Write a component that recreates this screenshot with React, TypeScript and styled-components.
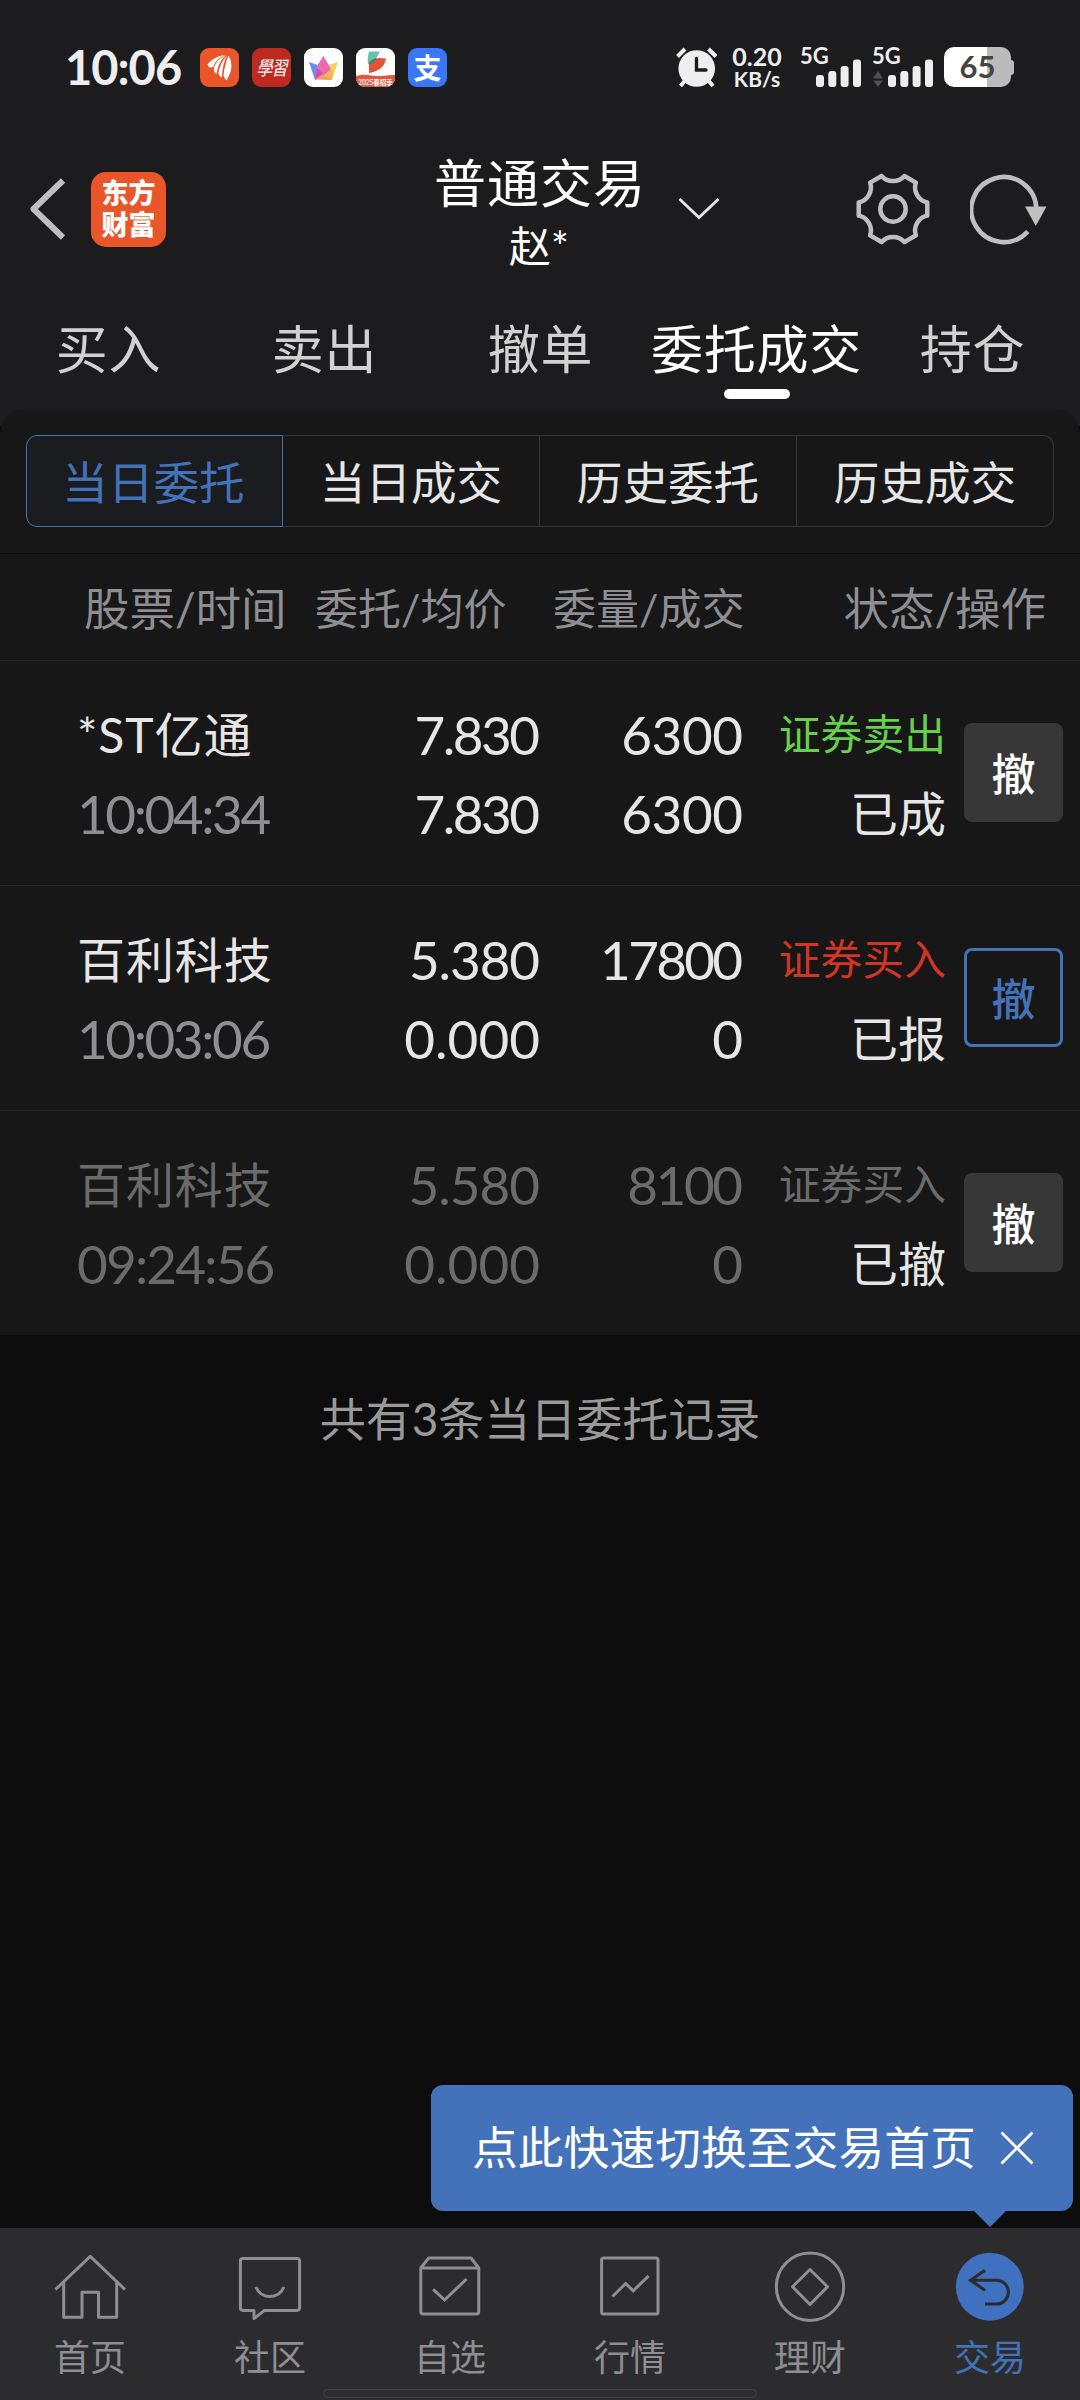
import React from "react";
import styled, { createGlobalStyle } from "styled-components";

const GlobalStyle = createGlobalStyle`
  * { box-sizing: border-box; }
  body { margin: 0; background: #0d0d0d; }
`;

const Page = styled.div`
  position: relative;
  width: 1080px;
  height: 2400px;
  display: flex;
  flex-direction: column;
  overflow: hidden;
  background: #0d0d0d;
  color: #e6e6e6;
  font-family: Lato, "Noto Sans CJK SC", sans-serif;
  white-space: nowrap;
`;

const Top = styled.header`
  flex: none;
  height: 426px;
  background: #1c1c1e;
`;

/* ---------- status bar ---------- */

const StatusBar = styled.div`
  height: 134px;
  padding: 0 67px 0 65px;
  display: flex;
  align-items: center;
  justify-content: space-between;
  color: #eeeeee;
`;

const StatusSide = styled.div`
  display: flex;
  align-items: center;
`;

const Clock = styled.span`
  width: 135px;
  font-size: 47px;
  font-weight: 700;
  line-height: 60px;
  letter-spacing: -1px;
`;

const AppIcons = styled.div`
  display: flex;
  gap: 13px;
`;

const AppIcon = styled.div<{ $bg: string }>`
  position: relative;
  width: 39px;
  height: 39px;
  border-radius: 9px;
  overflow: hidden;
  background: ${(p) => p.$bg};
  color: #fff;
  display: flex;
  align-items: center;
  justify-content: center;
`;

const Calligraphy = styled.span`
  font: italic 400 16px/20px "Noto Sans CJK TC", sans-serif;
  letter-spacing: -1px;
  transform: scaleY(1.2);
`;

const Ribbon = styled.span`
  position: absolute;
  left: 0;
  right: 0;
  bottom: 0;
  height: 11px;
  background: #df5641;
  font: 700 6.5px/14px Lato, "Noto Sans CJK SC", sans-serif;
  text-align: center;
`;

const Pay = styled.span`
  font: 700 28px/36px "Noto Sans CJK SC", sans-serif;
`;

const Speed = styled.div`
  width: 58px;
  margin-left: 10px;
  display: flex;
  flex-direction: column;
  align-items: center;
  font-weight: 700;
`;

const SpeedValue = styled.span`
  font-size: 25px;
  line-height: 23px;
`;

const SpeedUnit = styled.span`
  font-size: 21px;
  line-height: 22px;
`;

const Signal = styled.div<{ $gap: number }>`
  position: relative;
  width: 60px;
  height: 40px;
  margin-left: ${(p) => p.$gap}px;
`;

const Network = styled.span`
  position: absolute;
  left: -1px;
  top: -3px;
  font-size: 22px;
  line-height: 24px;
  font-weight: 700;
`;

const Battery = styled.div`
  width: 67px;
  height: 40px;
  margin-left: 11px;
  border-radius: 10px;
  background: linear-gradient(90deg, #fff 63.5%, #bbb 63.5%);
  color: #444;
  font-size: 31px;
  font-weight: 700;
  line-height: 39px;
  text-align: center;
`;

const BatteryTip = styled.div`
  width: 3px;
  height: 15px;
  border-radius: 0 3px 3px 0;
  background: #bbb;
  margin-right: -1px;
`;

/* ---------- title bar ---------- */

const TitleBar = styled.div`
  height: 150px;
  padding: 0 30px 0 28px;
  display: grid;
  grid-template-columns: 400px 1fr 400px;
  align-items: center;
`;

const BackArea = styled.div`
  display: flex;
  align-items: center;
  gap: 25px;
`;

const Brand = styled.div`
  width: 75px;
  height: 75px;
  border-radius: 15px;
  background: #ea5529;
  color: #fff;
  font: 900 27px/32px "Noto Sans CJK SC", sans-serif;
  text-align: center;
  padding-top: 4px;
`;

const TitleArea = styled.div`
  display: flex;
  flex-direction: column;
  align-items: center;
  padding-top: 11px;
  color: #fff;
`;

const TitleLine = styled.div`
  position: relative;
  left: 1px;
`;

const Title = styled.h1`
  margin: 3px 0 0;
  font-size: 52px;
  letter-spacing: 1px;
  font-weight: 400;
  line-height: 60px;
`;

const ChevronSlot = styled.span`
  position: absolute;
  left: 244px;
  top: 47px;
  line-height: 0;
`;

const Owner = styled.span`
  font-size: 42px;
  line-height: 66px;
`;

const Actions = styled.div`
  display: flex;
  align-items: center;
  justify-content: flex-end;
  gap: 39px;
`;

/* ---------- tabs ---------- */

const Tabs = styled.nav`
  display: grid;
  grid-template-columns: repeat(5, 1fr);
  height: 125px;
`;

const Tab = styled.div<{ $active?: boolean }>`
  display: flex;
  flex-direction: column;
  align-items: center;
  padding: 30px 0 0 1px;
  font-size: 52px;
  letter-spacing: 0.8px;
  line-height: 70px;
  color: ${(p) => (p.$active ? "#ffffff" : "#d1d1d1")};

  &::after {
    content: "";
    width: 66px;
    height: 10px;
    margin-top: 5px;
    border-radius: 5px;
    background: ${(p) => (p.$active ? "#ffffff" : "transparent")};
  }
`;

/* ---------- order panel ---------- */

const Panel = styled.main`
  flex: none;
  margin-top: -17px;
  border-radius: 25px 25px 0 0;
  background: #171717;
`;

const SegmentWrap = styled.div`
  height: 145px;
  padding: 26px 26px 0;
  border-bottom: 1px solid #0b0b0b;
`;

const Segments = styled.div`
  display: flex;
  height: 92px;
  font-size: 45.6px;
`;

const Segment = styled.div<{ $active?: boolean }>`
  width: 257px;
  display: flex;
  align-items: center;
  justify-content: center;
  line-height: 86px;
  padding-top: 4px;
  border: 1px solid ${(p) => (p.$active ? "#4472b4" : "#363636")};
  border-left-width: ${(p) => (p.$active ? 1 : 0)}px;
  color: ${(p) => (p.$active ? "#4472b8" : "#e6e6e6")};
  background: ${(p) => (p.$active ? "#1a1c20" : "transparent")};

  &:first-child { border-radius: 11px 0 0 11px; padding-right: 2px; }
  &:last-child { border-radius: 0 11px 11px 0; }
`;

const ColumnHeads = styled.div`
  display: grid;
  grid-template-columns: 231px 238px 1fr auto;
  height: 107px;
  padding: 0 34px 0 84px;
  border-bottom: 1px solid #272727;
  line-height: 110px;
  color: #8e8e93;
`;

const Head = styled.span<{ $size: number }>`
  font-size: ${(p) => p.$size}px;
`;

const OrderRow = styled.section`
  display: grid;
  grid-template-columns: 201px 262px 203px 203px 99px;
  align-items: center;
  height: 225px;
  padding: 0 0 0 77px;
  border-bottom: 1px solid #242424;

  &:last-child {
    height: 224px;
    border-bottom: 0;
  }
`;

const Cell = styled.div<{ $align?: string }>`
  display: flex;
  flex-direction: column;
  align-items: ${(p) => p.$align ?? "flex-end"};
  padding-top: 2px;
  line-height: 79px;
`;

const Name = styled.span<{ $color: string }>`
  font-size: 48px;
  letter-spacing: 0.9px;
  color: ${(p) => p.$color};
`;

const Time = styled.span<{ $color: string; $tracking: number }>`
  font-size: 53px;
  letter-spacing: ${(p) => p.$tracking}px;
  color: ${(p) => p.$color};
`;

/* The trailing tracking is given back as a margin so the column edge stays straight. */
const Figure = styled.span<{ $color: string; $tracking: number }>`
  font-size: 53px;
  letter-spacing: ${(p) => p.$tracking}px;
  margin-right: ${(p) => -p.$tracking}px;
  color: ${(p) => p.$color};
`;

const Side = styled.span<{ $color: string }>`
  font-size: 41.8px;
  color: ${(p) => p.$color};
`;

const State = styled.span`
  font-size: 48px;
  color: #e6e6e6;
`;

const CancelButton = styled.button<{ $outlined?: boolean }>`
  width: 99px;
  height: 99px;
  margin: 0 0 1px 18px;
  padding: 2px 0 0;
  border: ${(p) => (p.$outlined ? "3px solid #4472b8" : "0")};
  border-radius: 8px;
  background: ${(p) => (p.$outlined ? "transparent" : "#373737")};
  color: ${(p) => (p.$outlined ? "#4472b8" : "#ffffff")};
  font: 500 44px/90px Lato, "Noto Sans CJK SC", sans-serif;
`;

const Summary = styled.p`
  margin: 0;
  text-align: center;
  font-size: 46px;
  line-height: 168px;
  color: #999;
`;

/* ---------- tooltip ---------- */

const Hint = styled.div`
  position: absolute;
  left: 431px;
  top: 2085px;
  width: 642px;
  height: 126px;
  padding: 0 39px 0 41px;
  border-radius: 12px;
  background: #4472ba;
  color: #fff;
  font-size: 45.8px;
  line-height: 124px;
  display: flex;
  align-items: center;
  justify-content: space-between;

  &::after {
    content: "";
    position: absolute;
    left: 542px;
    top: 125px;
    border: 17px solid transparent;
    border-top-color: #4472ba;
    border-bottom: 0;
  }
`;

/* ---------- bottom navigation ---------- */

const BottomNav = styled.nav`
  position: relative;
  flex: none;
  margin-top: auto;
  height: 172px;
  display: grid;
  grid-template-columns: repeat(6, 1fr);
  background: #2c2c2e;
`;

const NavItem = styled.div<{ $active?: boolean }>`
  display: flex;
  flex-direction: column;
  align-items: center;
  padding-top: 18px;
  color: ${(p) => (p.$active ? "#4472b8" : "#8e8e93")};
  font-size: 36px;
  line-height: 62px;
`;

const HomeHandle = styled.div`
  position: absolute;
  left: 323px;
  top: 161px;
  width: 434px;
  height: 9px;
  border-radius: 5px;
  border: 1px solid #404042;
  background: #2e2e2f;
`;

/* ---------- drawings ---------- */

const AlarmIcon = () => (
  <svg width="42" height="42" viewBox="0 0 42 42">
    <g stroke="#eee" strokeWidth="4" fill="none">
      <path d="M1.500 10.500 9 3M40 10.500 32.500 3" />
      <path d="M4.500 40l5-6M37 40l-5-6" />
    </g>
    <circle cx="20.700" cy="22.500" r="18.300" fill="#eee" />
    <path d="M20.500 12.500v11.500h9.500" stroke="#1c1c1e" strokeWidth="3.300" fill="none" strokeLinecap="round" />
  </svg>
);

const SignalBars = ({ arrows }: { arrows?: boolean }) => (
  <svg width="60" height="40" viewBox="0 0 60 40">
    <g fill="#eee">
      <rect x="15" y="28" width="8" height="12" rx="3" />
      <rect x="27.300" y="24" width="8" height="16" rx="3" />
      <rect x="39.600" y="19" width="8" height="21" rx="3" />
      <rect x="52" y="12.500" width="8" height="27.500" rx="3" />
    </g>
    {arrows && <path d="M0 31.500l5-7.500 5 7.500zM0 33.500l5 6.500 5-6.500z" fill="#505052" />}
  </svg>
);

const FlameLogo = () => (
  <svg width="39" height="39" viewBox="0 0 39 39" fill="#fff">
    <path d="M25 7C17 8 11 12 7.500 16.500c1 3.200 3.500 3.800 6 2C15 13.500 19 9.500 25 7z" />
    <path d="M26 7.300C20 9.500 16 14 14 19.500c-.500 3 .200 5 2.500 6.500C18 18.500 20 12.500 26 7.300z" />
    <path d="M27 7.500C22.500 12 19.500 18 18.500 25c.300 2.300 1.500 3.600 3.500 4.300C22 22 23.500 14.500 27 7.500z" />
    <path d="M28.300 7.800c-2 6-4 12-4.800 19.200.500 2.500 1.500 4.200 3 5.300 3-5 5.500-10 4.800-16.300-.300-3.300-1.300-6-3-8.200z" />
  </svg>
);

const CrownLogo = () => (
  <svg width="39" height="39" viewBox="0 0 39 39">
    <path d="M5 14l7.500 2.500L20 27l-9 5z" fill="#6a8ff0" />
    <path d="M34 14l-8 2.500L18 27l10 5z" fill="#f6cf63" />
    <path d="M19.500 8l7.500 13-8 9-8 1 2.500-14z" fill="#ea6bb0" />
    <path d="M27 21l-8 7 9 4 1-8z" fill="#f5b84d" />
    <path d="M10 31.500l9-4.500 9.500 5z" fill="#e9a25c" />
    <path d="M13 20l-2 11.500 8-6z" fill="#d94ab0" />
  </svg>
);

const LeafLogo = () => (
  <svg width="39" height="39" viewBox="0 0 39 39">
    <path d="M13 3.500h11l-5.500 10-6.500 3c-.800-5 0-9 1-13z" fill="#67c3ae" />
    <path d="M13 14c5-4.500 11-4.500 17-3.500-1 8-7.500 13-17 14.500z" fill="#df5339" />
    <path d="M12.500 16c2-3.500 5-5.500 8-6l-4 6z" fill="#3a8a72" />
    <path d="M0 28c9-3 15 0 22 0s10-1 17-1v5H0z" fill="#df5641" />
  </svg>
);

const BackIcon = () => (
  <svg width="38" height="64" viewBox="0 0 38 64">
    <path d="M35 3.500 5.500 32l29.500 28.500" fill="none" stroke="#bfbfbf" strokeWidth="6" strokeLinejoin="round" />
  </svg>
);

const gearPath = (() => {
  const at = (x: number, y: number, step: number) => {
    const a = (step * Math.PI) / 3;
    const px = 38 + x * Math.cos(a) - y * Math.sin(a);
    const py = 38 + x * Math.sin(a) + y * Math.cos(a);
    return `${px.toFixed(2)} ${py.toFixed(2)}`;
  };
  return (
    [0, 1, 2, 3, 4, 5]
      .map((k) => `${k ? "L" : "M"}${at(-11.4, -33, k)}C${at(-5.5, -26.2, k)} ${at(5.5, -26.2, k)} ${at(11.4, -33, k)}`)
      .join("") + "Z"
  );
})();

const GearIcon = () => (
  <svg width="76" height="76" viewBox="0 0 76 76" fill="none" stroke="#bfbfbf" strokeWidth="4.500" strokeLinejoin="round">
    <path d={gearPath} />
    <circle cx="38" cy="38" r="12.700" />
  </svg>
);

const RefreshIcon = () => (
  <svg width="80" height="76" viewBox="0 0 80 76">
    <path d="M66.300 38A32.500 32.500 0 1 0 57.800 60.500" fill="none" stroke="#bfbfbf" strokeWidth="4.600" />
    <path d="M55 35.500H76.500L65.800 55z" fill="#bfbfbf" />
  </svg>
);

const CloseIcon = () => (
  <svg width="34" height="34" viewBox="0 0 34 34">
    <path d="M1.500 1.500l31 31M32.500 1.500l-31 31" stroke="#fff" strokeWidth="2.800" />
  </svg>
);

const NavSvg = ({ children }: { children: React.ReactNode }) => (
  <svg width="80" height="80" viewBox="0 0 80 80" fill="none" stroke="currentColor" strokeWidth="3">
    {children}
  </svg>
);

const navItems = [
  {
    label: "首页",
    icon: (
      <path d="M5.500 43.500 40.200 10.300 75 43.500M13.700 35.500v35.800H32v-25h16.500v25h18.200V35.500" strokeLinejoin="round" />
    ),
  },
  {
    label: "社区",
    icon: (
      <>
        <path d="M13 12.500h54q2.600 0 2.600 2.600v46.700q0 2.600-2.600 2.600H34.500L24 72.600v-8.200H13q-2.600 0-2.600-2.600V15.100q0-2.600 2.600-2.600z" strokeLinejoin="round" />
        <path d="M25.900 41q4 9.500 14 9.500t14-9.500" />
      </>
    ),
  },
  {
    label: "自选",
    icon: (
      <>
        <path d="M10.800 22 18.700 12H61l7.800 10v43.500q0 2.500-2.500 2.500h-53q-2.500 0-2.500-2.500zM10.800 22h58" strokeLinejoin="round" />
        <path d="M23.200 43.300 34.600 54l21.900-21" />
      </>
    ),
  },
  {
    label: "行情",
    icon: (
      <>
        <rect x="11.600" y="12" width="56.400" height="56" rx="2" />
        <path d="M22.500 50.500 35.700 37.500l7.500 7.300 15.500-15" />
      </>
    ),
  },
  {
    label: "理财",
    icon: (
      <>
        <circle cx="40" cy="40.700" r="33.700" />
        <path d="M40 23.500 57.500 40.700 40 58.500 22.500 40.700z" strokeLinejoin="round" />
      </>
    ),
  },
  {
    label: "交易",
    active: true,
    icon: (
      <>
        <circle cx="39.800" cy="40.700" r="34" fill="#4070c0" stroke="none" />
        <path d="M35 24.300 20.500 34.300 35 44.300M20.500 34.300H46.500a11.900 11.900 0 0 1 0 23.800H35" stroke="#2c2c2e" />
      </>
    ),
  },
];

/* ---------- data ---------- */

const WHITE = "#e6e6e6";
const GREY = "#8e8e93";
const DIM = "#6b6b6b";

/* Digits 1 and 7 carry wide side bearings, so figures holding them are set tighter. */
const TRACKING: Record<string, number> = {
  "7.830": -2.5,
  "5.380": -1.1,
  "5.580": -1,
  "0.000": 0.1,
  "17800": -2.7,
  "8100": -2.4,
  "6300": -0.4,
  "09:24:56": -1.8,
};

const tracking = (value: string, fallback = 0) => TRACKING[value] ?? fallback;

const orders = [
  { name: "*ST亿通", time: "10:04:34", price: "7.830", avg: "7.830", qty: "6300", done: "6300", side: "证券卖出", sideColor: "#67cf4b", state: "已成" },
  { name: "百利科技", time: "10:03:06", price: "5.380", avg: "0.000", qty: "17800", done: "0", side: "证券买入", sideColor: "#d03526", state: "已报", open: true },
  { name: "百利科技", time: "09:24:56", price: "5.580", avg: "0.000", qty: "8100", done: "0", side: "证券买入", sideColor: DIM, state: "已撤", dim: true },
];

const tabs = ["买入", "卖出", "撤单", "委托成交", "持仓"];
const segments = ["当日委托", "当日成交", "历史委托", "历史成交"];

const FigurePair = ({ values, color }: { values: string[]; color: string }) => (
  <Cell>
    {values.map((v, i) => (
      <Figure key={i} $color={color} $tracking={tracking(v)}>{v}</Figure>
    ))}
  </Cell>
);

export default function App() {
  return (
    <Page lang="zh-CN">
      <GlobalStyle />
      <Top>
        <StatusBar>
          <StatusSide>
            <Clock>10:06</Clock>
            <AppIcons>
              <AppIcon $bg="#ea5529"><FlameLogo /></AppIcon>
              <AppIcon $bg="#c0291f"><Calligraphy>學習</Calligraphy></AppIcon>
              <AppIcon $bg="#ffffff"><CrownLogo /></AppIcon>
              <AppIcon $bg="#ffffff"><LeafLogo /><Ribbon>2025春招季</Ribbon></AppIcon>
              <AppIcon $bg="#3a76f5"><Pay>支</Pay></AppIcon>
            </AppIcons>
          </StatusSide>
          <StatusSide>
            <AlarmIcon />
            <Speed>
              <SpeedValue>0.20</SpeedValue>
              <SpeedUnit>KB/s</SpeedUnit>
            </Speed>
            <Signal $gap={15}><Network>5G</Network><SignalBars /></Signal>
            <Signal $gap={12}><Network>5G</Network><SignalBars arrows /></Signal>
            <Battery>65</Battery>
            <BatteryTip />
          </StatusSide>
        </StatusBar>

        <TitleBar>
          <BackArea>
            <BackIcon />
            <Brand>东方<br />财富</Brand>
          </BackArea>
          <TitleArea>
            <TitleLine>
              <Title>普通交易</Title>
              <ChevronSlot>
                <svg width="42" height="24" viewBox="0 0 42 24">
                  <path d="M1.500 2 21 20.500 40.500 2" fill="none" stroke="#e8e8e8" strokeWidth="2.800" />
                </svg>
              </ChevronSlot>
            </TitleLine>
            <Owner>赵*</Owner>
          </TitleArea>
          <Actions>
            <GearIcon />
            <RefreshIcon />
          </Actions>
        </TitleBar>

        <Tabs>
          {tabs.map((t) => (
            <Tab key={t} $active={t === "委托成交"}>{t}</Tab>
          ))}
        </Tabs>
      </Top>

      <Panel>
        <SegmentWrap>
          <Segments>
            {segments.map((s, i) => (
              <Segment key={s} $active={i === 0}>{s}</Segment>
            ))}
          </Segments>
        </SegmentWrap>
        <ColumnHeads>
          <Head $size={45.5}>股票/时间</Head>
          <Head $size={43}>委托/均价</Head>
          <Head $size={43}>委量/成交</Head>
          <Head $size={45.5}>状态/操作</Head>
        </ColumnHeads>
        {orders.map((o) => {
          const main = o.dim ? DIM : WHITE;
          return (
            <OrderRow key={o.time}>
              <Cell $align="flex-start">
                <Name $color={main}>{o.name}</Name>
                <Time $color={o.dim ? DIM : GREY} $tracking={tracking(o.time, -2.4)}>{o.time}</Time>
              </Cell>
              <FigurePair values={[o.price, o.avg]} color={main} />
              <FigurePair values={[o.qty, o.done]} color={main} />
              <Cell>
                <Side $color={o.sideColor}>{o.side}</Side>
                <State>{o.state}</State>
              </Cell>
              <CancelButton $outlined={o.open}>撤</CancelButton>
            </OrderRow>
          );
        })}
      </Panel>

      <Summary>共有3条当日委托记录</Summary>

      <BottomNav>
        {navItems.map((n) => (
          <NavItem key={n.label} $active={n.active}>
            <NavSvg>{n.icon}</NavSvg>
            {n.label}
          </NavItem>
        ))}
        <HomeHandle />
      </BottomNav>

      <Hint>
        点此快速切换至交易首页
        <CloseIcon />
      </Hint>
    </Page>
  );
}
